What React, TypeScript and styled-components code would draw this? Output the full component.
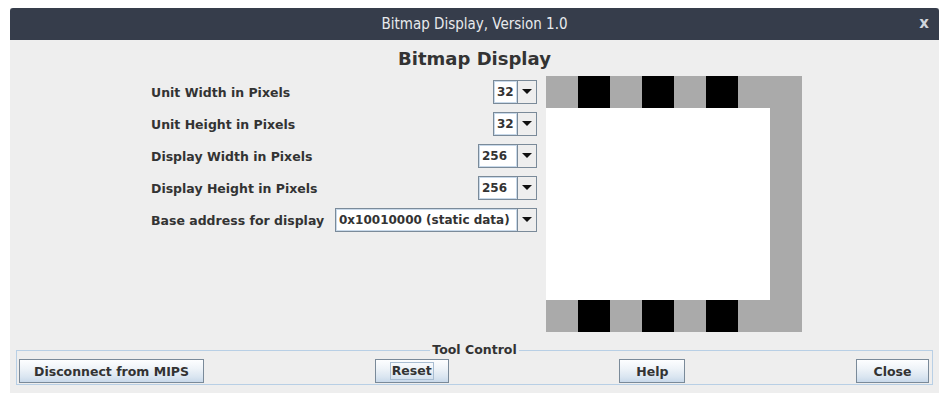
import React from "react";
import styled, { createGlobalStyle } from "styled-components";

const Global = createGlobalStyle`
  html, body { margin: 0; padding: 0; background: #ffffff; }
  body { font-family: "DejaVu Sans", "Liberation Sans", sans-serif; }
`;

const Window = styled.div`
  margin: 8px 0 0 10px;
  width: 929px;
  background: #eeeeee;
  display: flex;
  flex-direction: column;
`;

const TitleBar = styled.div`
  height: 32px;
  background: #363d4b;
  border-radius: 3px 3px 0 0;
  position: relative;
  display: flex;
  align-items: center;
  justify-content: center;
  color: #e8eaed;
  font-family: "DejaVu Sans Condensed", "DejaVu Sans", sans-serif;
  font-size: 15px;
`;

const CloseX = styled.span`
  position: absolute;
  right: 10px;
  top: 6px;
  font-family: "DejaVu Sans", sans-serif;
  font-size: 15px;
  font-weight: bold;
  color: #d0d5dc;
`;

const Heading = styled.div`
  height: 36px;
  display: flex;
  align-items: center;
  justify-content: center;
  font-weight: bold;
  font-size: 18px;
  color: #333333;
  padding-top: 1px;
  box-sizing: border-box;
`;

const Main = styled.div`
  display: flex;
  gap: 9px;
  padding-left: 141px;
  height: 256px;
`;

const Form = styled.div`
  width: 386px;
  padding-top: 4px;
  display: flex;
  flex-direction: column;
  gap: 8px;
`;

const Row = styled.div`
  height: 24px;
  display: flex;
  align-items: center;
  justify-content: space-between;
`;

const Label = styled.span`
  font-weight: bold;
  font-size: 12.5px;
  color: #333333;
  white-space: nowrap;
`;

const Combo = styled.div<{ $w: number }>`
  width: ${(p) => p.$w}px;
  height: 24px;
  box-sizing: border-box;
  border: 1px solid #7a8a99;
  display: flex;
  background: #eeeeee;
`;

const ComboText = styled.div`
  flex: 1;
  min-width: 0;
  background: #ffffff;
  box-shadow: inset 0 0 0 1px #c8d9ea;
  border-right: 1px solid #7a8a99;
  display: flex;
  align-items: center;
  padding-left: 3px;
  font-weight: bold;
  font-size: 12px;
  color: #333333;
  white-space: nowrap;
  overflow: hidden;
`;

const ComboArrow = styled.div`
  width: 18px;
  display: flex;
  align-items: center;
  justify-content: center;
`;

const Bitmap = styled.div`
  width: 256px;
  height: 256px;
  display: grid;
  grid-template-columns: repeat(8, 32px);
  grid-template-rows: repeat(8, 32px);
`;

const Cell = styled.div<{ $c: string }>`
  background: ${(p) => p.$c};
`;

const Group = styled.fieldset`
  margin: 11px 6px 8px 6px;
  padding: 0 2px 1px 2px;
  border: 1px solid #b8cfe5;
  min-width: 0;
`;

const Legend = styled.legend`
  margin: 0 auto;
  padding: 0 2px;
  font-weight: bold;
  font-size: 12.5px;
  line-height: 14px;
  color: #333333;
`;

const Buttons = styled.div`
  display: flex;
  justify-content: space-between;
  margin-top: 2px;
  padding-right: 1px;
`;

const Button = styled.button<{ $w: number }>`
  width: ${(p) => p.$w}px;
  height: 24px;
  box-sizing: border-box;
  border: 1px solid #7a8a99;
  border-radius: 0;
  background: linear-gradient(#fdfeff 0%, #eef3f8 40%, #dbe6f1 75%, #c9d9ea 100%);
  font-family: "DejaVu Sans", sans-serif;
  font-weight: bold;
  font-size: 12.5px;
  color: #333333;
  padding: 0;
  display: flex;
  align-items: center;
  justify-content: center;
  white-space: nowrap;
`;

const Focus = styled.span`
  border: 1px solid #a8bdd2;
  padding: 0 1px;
  line-height: 16px;
`;

const Arrow = () => (
  <svg width="10" height="6" viewBox="0 0 10 6">
    <polygon points="0,0 10,0 5,5" fill="#111" />
  </svg>
);

const G = "#aaaaaa";
const B = "#000000";
const W = "#ffffff";

const edgeRow = [G, B, G, B, G, B, G, G];
const midRow = [W, W, W, W, W, W, W, G];
const grid = [edgeRow, midRow, midRow, midRow, midRow, midRow, midRow, edgeRow];

const rows: { label: string; value: string; w: number }[] = [
  { label: "Unit Width in Pixels", value: "32", w: 44 },
  { label: "Unit Height in Pixels", value: "32", w: 44 },
  { label: "Display Width in Pixels", value: "256", w: 59 },
  { label: "Display Height in Pixels", value: "256", w: 59 },
  { label: "Base address for display", value: "0x10010000 (static data)", w: 202 },
];

export default function App() {
  return (
    <>
      <Global />
      <Window>
        <TitleBar>
          Bitmap Display, Version 1.0
          <CloseX>x</CloseX>
        </TitleBar>
        <Heading>Bitmap Display</Heading>
        <Main>
          <Form>
            {rows.map((r) => (
              <Row key={r.label}>
                <Label>{r.label}</Label>
                <Combo $w={r.w}>
                  <ComboText>{r.value}</ComboText>
                  <ComboArrow>
                    <Arrow />
                  </ComboArrow>
                </Combo>
              </Row>
            ))}
          </Form>
          <Bitmap>
            {grid.flatMap((row, i) =>
              row.map((c, j) => <Cell key={`${i}-${j}`} $c={c} />)
            )}
          </Bitmap>
        </Main>
        <Group>
          <Legend>Tool Control</Legend>
          <Buttons>
            <Button $w={185}>Disconnect from MIPS</Button>
            <Button $w={74}>
              <Focus>Reset</Focus>
            </Button>
            <Button $w={66}>Help</Button>
            <Button $w={73}>Close</Button>
          </Buttons>
        </Group>
      </Window>
    </>
  );
}
